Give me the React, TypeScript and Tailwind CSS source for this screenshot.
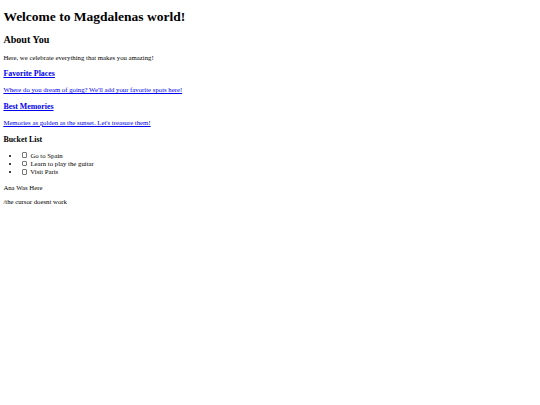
import React from "react";

function Box() {
  return (
    <span className="inline-block align-[-0.4px] w-[5.5px] h-[5.5px] ml-[1.7px] mr-[1.3px] border-[0.6px] border-[#767676] rounded-[1px] bg-white" />
  );
}

export default function App() {
  return (
    <div
      className="bg-white text-black min-h-[405px] px-[3.375px] py-[0.1px]"
      style={{ fontFamily: '"Liberation Serif", "Times New Roman", serif' }}
    >
      <h1 className="text-[13.5px] font-bold leading-[1.15] my-[9.05px]">Welcome to Magdalenas world!</h1>
      <h2 className="text-[10.125px] font-bold leading-[1.15] my-[8.4px]">About You</h2>
      <p className="text-[6.75px] leading-[1.15] my-[6.75px]">Here, we celebrate everything that makes you amazing!</p>
      <h3 className="text-[7.9px] font-bold leading-[1.15] my-[7.9px] text-[#0000ee] underline">Favorite Places</h3>
      <p className="text-[6.75px] leading-[1.15] my-[6.75px] text-[#0000ee] underline">
        Where do you dream of going? We'll add your favorite spots here!
      </p>
      <h3 className="text-[7.9px] font-bold leading-[1.15] my-[7.9px] text-[#0000ee] underline">Best Memories</h3>
      <p className="text-[6.75px] leading-[1.15] my-[6.75px] text-[#0000ee] underline">
        Memories as golden as the sunset. Let's treasure them!
      </p>
      <h3 className="text-[7.9px] font-bold leading-[1.15] my-[7.9px]">Bucket List</h3>
      <ul className="list-disc pl-[16.9px] my-[6.75px] text-[6.75px] leading-[8.4px]">
        <li><Box /> Go to Spain</li>
        <li><Box /> Learn to play the guitar</li>
        <li><Box /> Visit Paris</li>
      </ul>
      <p className="text-[6.75px] leading-[1.15] my-[6.75px]">Ana Was Here</p>
      <p className="text-[6.75px] leading-[1.15] my-[6.75px]">/the cursor doesnt work</p>
    </div>
  );
}
